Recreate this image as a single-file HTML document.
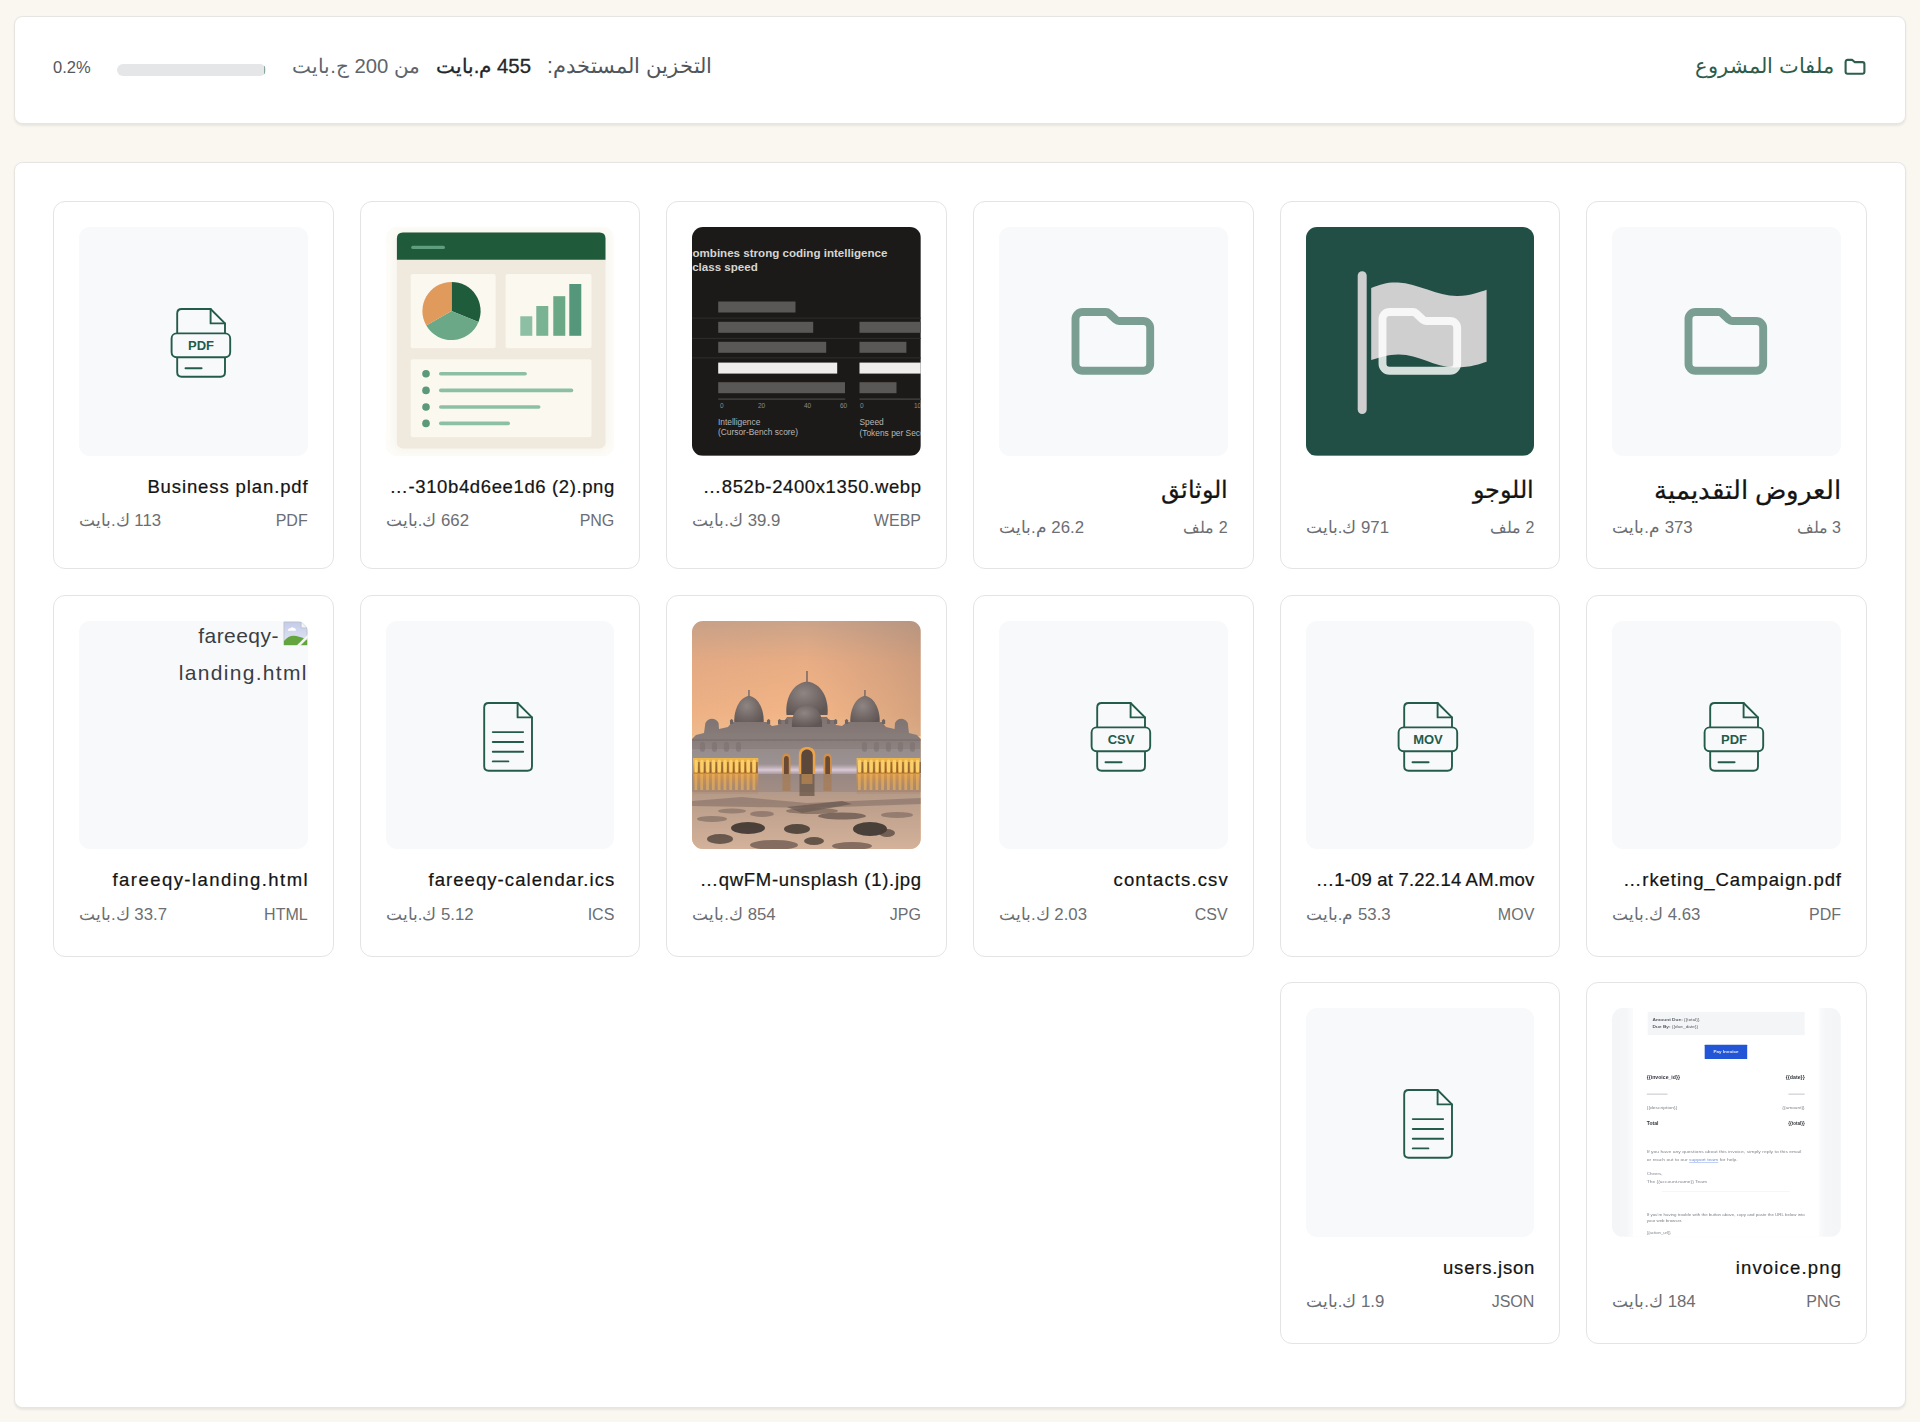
<!DOCTYPE html><html lang="ar"><head><meta charset="utf-8"><title>ملفات المشروع</title><style>

html,body{margin:0;padding:0}
body{width:1920px;height:1422px;overflow:hidden;background:#f9f7f0;font-family:"Liberation Sans",sans-serif;position:relative}
.panel{position:absolute;left:13.8px;width:1892px;box-sizing:border-box;background:#fff;border:1px solid #e6e5e2;border-radius:8.5px;box-shadow:0 1.5px 2.5px rgba(0,0,0,.07)}
.card{position:absolute;width:280.67px;box-sizing:border-box;border:1px solid #e4e4e4;border-radius:12px;background:#fff}
.thumb{position:absolute;left:25px;top:25px;width:228.67px;height:228.67px;border-radius:11px;background:#f8f9fb;overflow:hidden}
.thumb svg{position:absolute;left:0;top:0}
.t{position:absolute;white-space:nowrap;line-height:24px}
.title{right:25px;color:#141414;font-size:18.5px;letter-spacing:.9px;-webkit-text-stroke:.22px #141414}
.title.ar{font-size:24px;letter-spacing:0;direction:rtl}
.mr{right:25px;color:#6b6e72;font-size:16px;letter-spacing:0}
.ml{left:25px;color:#6b6e72;font-size:16.8px;direction:rtl}

</style></head><body>
<div class="panel" style="top:15.8px;height:108.5px"></div>
<svg style="position:absolute;left:1843px;top:57px" width="24" height="19" viewBox="0 0 24 19"><path d="M4.6 2.9 H9.3 L11.6 5.1 H19.4 Q21.4 5.1 21.4 7.1 V14.8 Q21.4 16.8 19.4 16.8 H4.6 Q2.6 16.8 2.6 14.8 V4.9 Q2.6 2.9 4.6 2.9 Z" fill="none" stroke="#2f5e4e" stroke-width="2.1" stroke-linejoin="round"/></svg>
<div class="t" style="right:86px;top:52px;font-size:21px;line-height:28px;color:#2d5c4b;direction:rtl">ملفات المشروع</div>
<div class="t" style="right:1208px;top:52px;font-size:21.4px;line-height:28px;color:#50565c;direction:rtl">التخزين المستخدم:</div>
<div class="t" style="right:1389px;top:52px;font-size:20.4px;line-height:28px;color:#23272b;-webkit-text-stroke:.3px #23272b;direction:rtl">455 م.بايت</div>
<div class="t" style="right:1500px;top:52px;font-size:20.3px;line-height:28px;color:#5f656b;direction:rtl">من 200 ج.بايت</div>
<div style="position:absolute;left:117px;top:64px;width:149px;height:12px;border-radius:6px;background:#e4e6e8;overflow:hidden"><div style="position:absolute;right:1px;top:2px;width:1.2px;height:8px;background:#8aa59c"></div></div>
<div class="t" style="left:53px;top:56px;font-size:16.5px;line-height:22px;color:#52575c">0.2%</div>
<div class="panel" style="top:161.8px;height:1246.5px"></div>
<div class="card" style="left:1586.33px;top:201.00px;height:368.00px">
<div class="thumb"><svg width="228.67" height="228.67" viewBox="0 0 228.67 228.67"><path d="M83.50 85.00 L106.90 85.00 Q108.70 85.00 109.96 86.26 L116.94 92.74 Q118.20 94.00 120.00 94.00 L144.20 94.00 A7.00 7.00 0 0 1 151.20 101.00 L151.20 136.80 A7.00 7.00 0 0 1 144.20 143.80 L83.50 143.80 A7.00 7.00 0 0 1 76.50 136.80 L76.50 92.00 A7.00 7.00 0 0 1 83.50 85.00 Z" fill="none" stroke="#7a9f92" stroke-width="7.9" stroke-linejoin="round"/></svg></div>
<div class="t title ar" style="top:275.5px;font-size:26px">العروض التقديمية</div>
<div class="t mr" style="top:314.0px;direction:rtl">3 ملف</div>
<div class="t ml" style="top:314.0px">373 م.بايت</div>
</div>
<div class="card" style="left:1279.67px;top:201.00px;height:368.00px">
<div class="thumb"><svg width="228.67" height="228.67" viewBox="0 0 228.67 228.67"><rect width="228.67" height="228.67" fill="#214f45"/><rect x="51.7" y="44.2" width="9" height="142.8" rx="4.5" fill="#cfcfd0"/><path d="M65.2 61 C75 57 82 55 92 55.5 C112 56.5 132 69.5 152 69 C165 68.7 174 65 180.6 62.8 L180.6 134.8 C174 137 165 140.6 148 140.4 C128 140 112 127 92 127.5 C82 127.8 75 130 65.2 133 Z" fill="#cfcfd0"/><path d="M83.50 85.00 L106.90 85.00 Q108.70 85.00 109.96 86.26 L116.94 92.74 Q118.20 94.00 120.00 94.00 L144.20 94.00 A7.00 7.00 0 0 1 151.20 101.00 L151.20 136.80 A7.00 7.00 0 0 1 144.20 143.80 L83.50 143.80 A7.00 7.00 0 0 1 76.50 136.80 L76.50 92.00 A7.00 7.00 0 0 1 83.50 85.00 Z" fill="none" stroke="rgba(255,255,255,.82)" stroke-width="7.9" stroke-linejoin="round"/></svg></div>
<div class="t title ar" style="top:275.5px;font-size:24px">اللوجو</div>
<div class="t mr" style="top:314.0px;direction:rtl">2 ملف</div>
<div class="t ml" style="top:314.0px">971 ك.بايت</div>
</div>
<div class="card" style="left:973.00px;top:201.00px;height:368.00px">
<div class="thumb"><svg width="228.67" height="228.67" viewBox="0 0 228.67 228.67"><path d="M83.50 85.00 L106.90 85.00 Q108.70 85.00 109.96 86.26 L116.94 92.74 Q118.20 94.00 120.00 94.00 L144.20 94.00 A7.00 7.00 0 0 1 151.20 101.00 L151.20 136.80 A7.00 7.00 0 0 1 144.20 143.80 L83.50 143.80 A7.00 7.00 0 0 1 76.50 136.80 L76.50 92.00 A7.00 7.00 0 0 1 83.50 85.00 Z" fill="none" stroke="#7a9f92" stroke-width="7.9" stroke-linejoin="round"/></svg></div>
<div class="t title ar" style="top:275.5px;font-size:24px">الوثائق</div>
<div class="t mr" style="top:314.0px;direction:rtl">2 ملف</div>
<div class="t ml" style="top:314.0px">26.2 م.بايت</div>
</div>
<div class="card" style="left:666.33px;top:201.00px;height:368.00px">
<div class="thumb"><svg width="228.67" height="228.67" viewBox="0 0 228.67 228.67"><rect width="228.67" height="228.67" fill="#1b1a19"/><text x="-6" y="30.5" font-family="Liberation Sans" font-weight="bold" font-size="11.6" fill="#d6d5d2">combines strong coding intelligence</text><text x="-14" y="44" font-family="Liberation Sans" font-weight="bold" font-size="11.6" fill="#d6d5d2">in-class speed</text><rect x="0" y="90.6" width="228.67" height="1" fill="#302e2c"/><rect x="0" y="110.9" width="228.67" height="1" fill="#302e2c"/><rect x="0" y="130.4" width="228.67" height="1" fill="#302e2c"/><rect x="26.2" y="74.5" width="77.3" height="11" fill="#5a5856"/><rect x="26.2" y="94.8" width="95.0" height="11" fill="#5a5856"/><rect x="167.5" y="94.8" width="61.2" height="11" fill="#5a5856"/><rect x="26.2" y="114.8" width="108.0" height="11" fill="#5a5856"/><rect x="167.5" y="114.8" width="46.9" height="11" fill="#5a5856"/><rect x="26.2" y="135.6" width="119.0" height="11" fill="#efeeec"/><rect x="167.5" y="135.6" width="61.2" height="11" fill="#efeeec"/><rect x="26.2" y="155.2" width="126.8" height="11" fill="#5a5856"/><rect x="167.5" y="155.2" width="37.0" height="11" fill="#5a5856"/><rect x="26.2" y="171.5" width="127" height="1.2" fill="#4a4846"/><rect x="167.5" y="171.5" width="62" height="1.2" fill="#4a4846"/><text x="28" y="181" font-family="Liberation Sans" font-size="6.5" fill="#8d8b88">0</text><text x="66" y="181" font-family="Liberation Sans" font-size="6.5" fill="#8d8b88">20</text><text x="112" y="181" font-family="Liberation Sans" font-size="6.5" fill="#8d8b88">40</text><text x="148" y="181" font-family="Liberation Sans" font-size="6.5" fill="#8d8b88">60</text><text x="168" y="181" font-family="Liberation Sans" font-size="6.5" fill="#8d8b88">0</text><text x="222" y="181" font-family="Liberation Sans" font-size="6.5" fill="#8d8b88">10</text><text x="26" y="198" font-family="Liberation Sans" font-size="8.4" fill="#b9b7b4">Intelligence</text><text x="26" y="208.5" font-family="Liberation Sans" font-size="8.4" fill="#b9b7b4">(Cursor-Bench score)</text><text x="167.5" y="198.5" font-family="Liberation Sans" font-size="8.4" fill="#b9b7b4">Speed</text><text x="167.5" y="209" font-family="Liberation Sans" font-size="8.4" fill="#b9b7b4">(Tokens per Second)</text></svg></div>
<div class="t title" style="top:272.6px;direction:ltr;letter-spacing:0.61px;right:24.39px">…852b-2400x1350.webp</div>
<div class="t mr" style="top:307.0px;direction:rtl">WEBP</div>
<div class="t ml" style="top:307.0px">39.9 ك.بايت</div>
</div>
<div class="card" style="left:359.67px;top:201.00px;height:368.00px">
<div class="thumb"><svg width="228.67" height="228.67" viewBox="0 0 228.67 228.67"><rect width="228.67" height="228.67" fill="#fdfcf8"/><defs><filter id="sh" x="-20%" y="-20%" width="140%" height="140%"><feGaussianBlur stdDeviation="4"/></filter></defs><rect x="8" y="4" width="214" height="220" rx="8" fill="#ece6d6" opacity=".3" filter="url(#sh)"/><rect x="10.9" y="5.5" width="208.6" height="215.9" rx="6" fill="#efe9de"/><path d="M10.9 32.8 V11.5 Q10.9 5.5 16.9 5.5 H213.5 Q219.5 5.5 219.5 11.5 V32.8 Z" fill="#1f5a3b"/><rect x="25.2" y="18.8" width="33.8" height="3.2" rx="1.6" fill="#5f9d7f"/><rect x="24.7" y="47.1" width="85" height="74.1" rx="2" fill="#fbf8f0"/><rect x="119.6" y="47.1" width="85.9" height="74.1" rx="2" fill="#fbf8f0"/><rect x="24.7" y="132.2" width="180.8" height="78" rx="2" fill="#fbf8f0"/><path d="M65.50 84.00 L65.50 54.90 A29.10 29.10 0 0 1 92.48 94.90 Z" fill="#1e5c3c"/><path d="M65.50 84.00 L92.48 94.90 A29.10 29.10 0 0 1 40.30 98.55 Z" fill="#6aa888"/><path d="M65.50 84.00 L40.30 98.55 A29.10 29.10 0 0 1 65.50 54.90 Z" fill="#e09a5c"/><rect x="134.3" y="89.3" width="12" height="19.5" fill="#8cbfa3"/><rect x="150.3" y="79.0" width="12" height="29.8" fill="#79b394"/><rect x="167.3" y="69.2" width="12" height="39.6" fill="#6aa886"/><rect x="183.3" y="57.0" width="12" height="51.8" fill="#55977a"/><circle cx="40" cy="146.7" r="3.8" fill="#5a9a78"/><rect x="53" y="144.9" width="87.9" height="3.6" rx="1.8" fill="#8dbfa5"/><circle cx="40" cy="163.4" r="3.8" fill="#5a9a78"/><rect x="53" y="161.6" width="134.3" height="3.6" rx="1.8" fill="#8dbfa5"/><circle cx="40" cy="180.0" r="3.8" fill="#5a9a78"/><rect x="53" y="178.2" width="101.5" height="3.6" rx="1.8" fill="#8dbfa5"/><circle cx="40" cy="196.4" r="3.8" fill="#5a9a78"/><rect x="53" y="194.6" width="71.0" height="3.6" rx="1.8" fill="#8dbfa5"/></svg></div>
<div class="t title" style="top:272.6px;direction:ltr;letter-spacing:0.62px;right:24.38px">…-310b4d6ee1d6 (2).png</div>
<div class="t mr" style="top:307.0px;direction:rtl">PNG</div>
<div class="t ml" style="top:307.0px">662 ك.بايت</div>
</div>
<div class="card" style="left:53.00px;top:201.00px;height:368.00px">
<div class="thumb"><svg width="228.67" height="228.67" viewBox="0 0 228.67 228.67"><g fill="none" stroke="#245c4a" stroke-width="1.90" stroke-linejoin="round" stroke-linecap="round"><path d="M102.70 82.00 L131.60 82.00 L146.00 96.40 L146.00 145.30 Q146.00 149.80 141.50 149.80 L102.70 149.80 Q98.20 149.80 98.20 145.30 L98.20 86.50 Q98.20 82.00 102.70 82.00 Z"/><path d="M131.60 82.00 L131.60 96.40 L146.00 96.40"/><rect x="92.6" y="106.4" width="58.6" height="23.9" rx="5" fill="#f8f9fb"/><line x1="106.5" y1="141.2" x2="122.6" y2="141.2"/></g><text x="122" y="123.2" text-anchor="middle" font-family="Liberation Sans" font-weight="bold" font-size="13" fill="#245c4a">PDF</text></svg></div>
<div class="t title" style="top:272.6px;direction:ltr;letter-spacing:0.89px;right:24.11px">Business plan.pdf</div>
<div class="t mr" style="top:307.0px;direction:rtl">PDF</div>
<div class="t ml" style="top:307.0px">113 ك.بايت</div>
</div>
<div class="card" style="left:1586.33px;top:594.50px;height:362.00px">
<div class="thumb"><svg width="228.67" height="228.67" viewBox="0 0 228.67 228.67"><g fill="none" stroke="#245c4a" stroke-width="1.90" stroke-linejoin="round" stroke-linecap="round"><path d="M102.70 82.00 L131.60 82.00 L146.00 96.40 L146.00 145.30 Q146.00 149.80 141.50 149.80 L102.70 149.80 Q98.20 149.80 98.20 145.30 L98.20 86.50 Q98.20 82.00 102.70 82.00 Z"/><path d="M131.60 82.00 L131.60 96.40 L146.00 96.40"/><rect x="92.6" y="106.4" width="58.6" height="23.9" rx="5" fill="#f8f9fb"/><line x1="106.5" y1="141.2" x2="122.6" y2="141.2"/></g><text x="122" y="123.2" text-anchor="middle" font-family="Liberation Sans" font-weight="bold" font-size="13" fill="#245c4a">PDF</text></svg></div>
<div class="t title" style="top:272.6px;direction:ltr;letter-spacing:0.93px;right:24.07px">…rketing_Campaign.pdf</div>
<div class="t mr" style="top:307.0px;direction:rtl">PDF</div>
<div class="t ml" style="top:307.0px">4.63 ك.بايت</div>
</div>
<div class="card" style="left:1279.67px;top:594.50px;height:362.00px">
<div class="thumb"><svg width="228.67" height="228.67" viewBox="0 0 228.67 228.67"><g fill="none" stroke="#245c4a" stroke-width="1.90" stroke-linejoin="round" stroke-linecap="round"><path d="M102.70 82.00 L131.60 82.00 L146.00 96.40 L146.00 145.30 Q146.00 149.80 141.50 149.80 L102.70 149.80 Q98.20 149.80 98.20 145.30 L98.20 86.50 Q98.20 82.00 102.70 82.00 Z"/><path d="M131.60 82.00 L131.60 96.40 L146.00 96.40"/><rect x="92.6" y="106.4" width="58.6" height="23.9" rx="5" fill="#f8f9fb"/><line x1="106.5" y1="141.2" x2="122.6" y2="141.2"/></g><text x="122" y="123.2" text-anchor="middle" font-family="Liberation Sans" font-weight="bold" font-size="13" fill="#245c4a">MOV</text></svg></div>
<div class="t title" style="top:272.6px;direction:ltr;letter-spacing:0.17px;right:24.83px">…1-09 at 7.22.14 AM.mov</div>
<div class="t mr" style="top:307.0px;direction:rtl">MOV</div>
<div class="t ml" style="top:307.0px">53.3 م.بايت</div>
</div>
<div class="card" style="left:973.00px;top:594.50px;height:362.00px">
<div class="thumb"><svg width="228.67" height="228.67" viewBox="0 0 228.67 228.67"><g fill="none" stroke="#245c4a" stroke-width="1.90" stroke-linejoin="round" stroke-linecap="round"><path d="M102.70 82.00 L131.60 82.00 L146.00 96.40 L146.00 145.30 Q146.00 149.80 141.50 149.80 L102.70 149.80 Q98.20 149.80 98.20 145.30 L98.20 86.50 Q98.20 82.00 102.70 82.00 Z"/><path d="M131.60 82.00 L131.60 96.40 L146.00 96.40"/><rect x="92.6" y="106.4" width="58.6" height="23.9" rx="5" fill="#f8f9fb"/><line x1="106.5" y1="141.2" x2="122.6" y2="141.2"/></g><text x="122" y="123.2" text-anchor="middle" font-family="Liberation Sans" font-weight="bold" font-size="13" fill="#245c4a">CSV</text></svg></div>
<div class="t title" style="top:272.6px;direction:ltr;letter-spacing:1.12px;right:23.88px">contacts.csv</div>
<div class="t mr" style="top:307.0px;direction:rtl">CSV</div>
<div class="t ml" style="top:307.0px">2.03 ك.بايت</div>
</div>
<div class="card" style="left:666.33px;top:594.50px;height:362.00px">
<div class="thumb"><svg width="228.67" height="228.67" viewBox="0 0 228.67 228.67"><defs><linearGradient id="sky" x1="0" y1="0" x2="0" y2="1"><stop offset="0" stop-color="#cba389"/><stop offset=".18" stop-color="#e9ad84"/><stop offset=".4" stop-color="#f3b586"/><stop offset=".58" stop-color="#f7c594"/><stop offset="1" stop-color="#f4bf92"/></linearGradient><linearGradient id="skyx" x1="0" y1="0" x2="1" y2="0"><stop offset="0" stop-color="#8a7470" stop-opacity=".06"/><stop offset=".5" stop-color="#8a7470" stop-opacity="0"/><stop offset="1" stop-color="#7a6a66" stop-opacity=".25"/></linearGradient><linearGradient id="bld" x1="0" y1="0" x2="0" y2="1"><stop offset="0" stop-color="#7e7370"/><stop offset=".5" stop-color="#8c817e"/><stop offset="1" stop-color="#9d9496"/></linearGradient><linearGradient id="wat" x1="0" y1="0" x2="0" y2="1"><stop offset="0" stop-color="#a08f88"/><stop offset=".3" stop-color="#b89c8a"/><stop offset="1" stop-color="#d4b29a"/></linearGradient><radialGradient id="dome" cx=".42" cy=".35" r=".7"><stop offset="0" stop-color="#8f8583"/><stop offset=".6" stop-color="#716765"/><stop offset="1" stop-color="#5f5654"/></radialGradient><linearGradient id="lite" x1="0" y1="0" x2="0" y2="1"><stop offset="0" stop-color="#f2b94c"/><stop offset="1" stop-color="#c88838"/></linearGradient><linearGradient id="refl" x1="0" y1="0" x2="0" y2="1"><stop offset="0" stop-color="#d99646"/><stop offset="1" stop-color="#a88062" stop-opacity=".25"/></linearGradient><linearGradient id="glow" x1="0" y1="0" x2="0" y2="1"><stop offset="0" stop-color="#c8b6c2" stop-opacity="0"/><stop offset=".5" stop-color="#dccbd8"/><stop offset="1" stop-color="#a8949a" stop-opacity=".3"/></linearGradient><filter id="soft" x="0" y="0" width="1" height="1"><feGaussianBlur stdDeviation=".5"/></filter></defs><rect width="228.67" height="228.67" fill="url(#sky)"/><rect width="228.67" height="115" fill="url(#skyx)"/><g filter="url(#soft)"><rect x="114.3" y="50" width="1.4" height="12" fill="#6d6260"/><rect x="56.3" y="69" width="1.3" height="7" fill="#6d6260"/><rect x="172.3" y="69" width="1.3" height="7" fill="#6d6260"/><path d="M94.5 94 C93 78 100 62.5 115 60.6 C130 62.5 137 78 135.5 94 Z" fill="url(#dome)"/><path d="M42.5 104 C41 90 47 76.5 57 74.7 C67 76.5 73 90 71.5 104 Z" fill="url(#dome)"/><path d="M158.5 104 C157 90 163 76.5 173 74.7 C183 76.5 189 90 187.5 104 Z" fill="url(#dome)"/><path d="M0 118 L4 114 L12 112 L13.4 102 Q16 97.8 20 97.8 Q24 97.8 26.6 102 L27 108 L36 106 L40 101 L75 101 L80 105 L86 104 L88 99 L93 99 L95 96 L135 96 L137 99 L142 99 L144 104 L150 105 L155 101 L190 101 L194 106 L202.6 108 L203 102 Q205.5 97.8 209.2 97.8 Q213 97.8 215.8 102 L217 112 L225 114 L228.67 118 L228.67 156 L0 156 Z" fill="url(#bld)"/><path d="M100 106 C99 94 105 84.6 115 84.6 C125 84.6 131 94 130 106 Z" fill="url(#dome)"/><path d="M86.0 103 V99.5 Q87.6 96.5 89.2 99.5 V103 Z" fill="#6f6563"/><path d="M93.0 103 V99.5 Q94.6 96.5 96.2 99.5 V103 Z" fill="#6f6563"/><path d="M135.0 103 V99.5 Q136.6 96.5 138.2 99.5 V103 Z" fill="#6f6563"/><path d="M142.0 103 V99.5 Q143.6 96.5 145.2 99.5 V103 Z" fill="#6f6563"/><path d="M38.0 103 V99.5 Q39.6 96.5 41.2 99.5 V103 Z" fill="#6f6563"/><path d="M75.0 103 V99.5 Q76.6 96.5 78.2 99.5 V103 Z" fill="#6f6563"/><path d="M153.0 103 V99.5 Q154.6 96.5 156.2 99.5 V103 Z" fill="#6f6563"/><path d="M190.0 103 V99.5 Q191.6 96.5 193.2 99.5 V103 Z" fill="#6f6563"/><rect x="0" y="118" width="228.67" height="2" fill="#75696a" opacity=".5"/><rect x="0" y="128" width="228.67" height="24" fill="#a29a9c" opacity=".45"/><rect x="8.0" y="121" width="5" height="10" rx="2.5" fill="#7a6f6e" opacity=".55"/><rect x="20.0" y="121" width="5" height="10" rx="2.5" fill="#7a6f6e" opacity=".55"/><rect x="32.0" y="121" width="5" height="10" rx="2.5" fill="#7a6f6e" opacity=".55"/><rect x="44.0" y="121" width="5" height="10" rx="2.5" fill="#7a6f6e" opacity=".55"/><rect x="170.0" y="121" width="5" height="10" rx="2.5" fill="#7a6f6e" opacity=".55"/><rect x="182.0" y="121" width="5" height="10" rx="2.5" fill="#7a6f6e" opacity=".55"/><rect x="194.0" y="121" width="5" height="10" rx="2.5" fill="#7a6f6e" opacity=".55"/><rect x="206.0" y="121" width="5" height="10" rx="2.5" fill="#7a6f6e" opacity=".55"/><rect x="218.0" y="121" width="5" height="10" rx="2.5" fill="#7a6f6e" opacity=".55"/><rect x="1" y="137" width="65.3" height="16" fill="url(#lite)"/><rect x="164.6" y="137" width="63.6" height="16" fill="url(#lite)"/><rect x="2.5" y="138.5" width="3.2" height="13" rx="1.6" fill="#fbd06a"/><rect x="6.1" y="141" width="1.6" height="11" fill="#6a4628" opacity=".6"/><rect x="166.0" y="138.5" width="3.2" height="13" rx="1.6" fill="#fbd06a"/><rect x="169.6" y="141" width="1.6" height="11" fill="#6a4628" opacity=".6"/><rect x="8.3" y="138.5" width="3.2" height="13" rx="1.6" fill="#fbd06a"/><rect x="11.9" y="141" width="1.6" height="11" fill="#6a4628" opacity=".6"/><rect x="171.8" y="138.5" width="3.2" height="13" rx="1.6" fill="#fbd06a"/><rect x="175.4" y="141" width="1.6" height="11" fill="#6a4628" opacity=".6"/><rect x="14.1" y="138.5" width="3.2" height="13" rx="1.6" fill="#fbd06a"/><rect x="17.7" y="141" width="1.6" height="11" fill="#6a4628" opacity=".6"/><rect x="177.6" y="138.5" width="3.2" height="13" rx="1.6" fill="#fbd06a"/><rect x="181.2" y="141" width="1.6" height="11" fill="#6a4628" opacity=".6"/><rect x="19.9" y="138.5" width="3.2" height="13" rx="1.6" fill="#fbd06a"/><rect x="23.5" y="141" width="1.6" height="11" fill="#6a4628" opacity=".6"/><rect x="183.4" y="138.5" width="3.2" height="13" rx="1.6" fill="#fbd06a"/><rect x="187.0" y="141" width="1.6" height="11" fill="#6a4628" opacity=".6"/><rect x="25.7" y="138.5" width="3.2" height="13" rx="1.6" fill="#fbd06a"/><rect x="29.3" y="141" width="1.6" height="11" fill="#6a4628" opacity=".6"/><rect x="189.2" y="138.5" width="3.2" height="13" rx="1.6" fill="#fbd06a"/><rect x="192.8" y="141" width="1.6" height="11" fill="#6a4628" opacity=".6"/><rect x="31.5" y="138.5" width="3.2" height="13" rx="1.6" fill="#fbd06a"/><rect x="35.1" y="141" width="1.6" height="11" fill="#6a4628" opacity=".6"/><rect x="195.0" y="138.5" width="3.2" height="13" rx="1.6" fill="#fbd06a"/><rect x="198.6" y="141" width="1.6" height="11" fill="#6a4628" opacity=".6"/><rect x="37.3" y="138.5" width="3.2" height="13" rx="1.6" fill="#fbd06a"/><rect x="40.9" y="141" width="1.6" height="11" fill="#6a4628" opacity=".6"/><rect x="200.8" y="138.5" width="3.2" height="13" rx="1.6" fill="#fbd06a"/><rect x="204.4" y="141" width="1.6" height="11" fill="#6a4628" opacity=".6"/><rect x="43.1" y="138.5" width="3.2" height="13" rx="1.6" fill="#fbd06a"/><rect x="46.7" y="141" width="1.6" height="11" fill="#6a4628" opacity=".6"/><rect x="206.6" y="138.5" width="3.2" height="13" rx="1.6" fill="#fbd06a"/><rect x="210.2" y="141" width="1.6" height="11" fill="#6a4628" opacity=".6"/><rect x="48.9" y="138.5" width="3.2" height="13" rx="1.6" fill="#fbd06a"/><rect x="52.5" y="141" width="1.6" height="11" fill="#6a4628" opacity=".6"/><rect x="212.4" y="138.5" width="3.2" height="13" rx="1.6" fill="#fbd06a"/><rect x="216.0" y="141" width="1.6" height="11" fill="#6a4628" opacity=".6"/><rect x="54.7" y="138.5" width="3.2" height="13" rx="1.6" fill="#fbd06a"/><rect x="58.3" y="141" width="1.6" height="11" fill="#6a4628" opacity=".6"/><rect x="218.2" y="138.5" width="3.2" height="13" rx="1.6" fill="#fbd06a"/><rect x="221.8" y="141" width="1.6" height="11" fill="#6a4628" opacity=".6"/><rect x="60.5" y="138.5" width="3.2" height="13" rx="1.6" fill="#fbd06a"/><rect x="64.1" y="141" width="1.6" height="11" fill="#6a4628" opacity=".6"/><rect x="224.0" y="138.5" width="3.2" height="13" rx="1.6" fill="#fbd06a"/><rect x="227.6" y="141" width="1.6" height="11" fill="#6a4628" opacity=".6"/><rect x="66" y="143" width="98.6" height="12" fill="url(#glow)"/><path d="M106.8 153 V134 C106.8 128 110.5 125.9 115 125.9 C119.6 125.9 123.3 128 123.3 134 V153 Z" fill="#eca44c"/><path d="M109.3 153 V135 C109.3 131 111.8 128.6 115 128.6 C118.2 128.6 120.8 131 120.8 135 V153 Z" fill="#5b473b"/><path d="M90.2 153 V137 C90.2 134 92 132.5 94.4 132.5 C96.8 132.5 98.5 134 98.5 137 V153 Z" fill="#d0904a"/><path d="M92 153 V138 C92 136 93 135 94.4 135 C95.8 135 96.8 136 96.8 138 V153 Z" fill="#6b4a35"/><path d="M131.5 153 V137 C131.5 134 133.3 132.5 135.6 132.5 C138 132.5 139.8 134 139.8 137 V153 Z" fill="#d0904a"/><path d="M133.3 153 V138 C133.3 136 134.3 135 135.6 135 C137 135 138 136 138 138 V153 Z" fill="#6b4a35"/><rect x="0" y="153" width="228.67" height="76" fill="url(#wat)"/><rect x="0" y="153" width="228.67" height="18" fill="#8d7f7c" opacity=".45"/><rect x="1" y="153" width="65.3" height="20" fill="url(#refl)"/><rect x="164.6" y="153" width="63.6" height="20" fill="url(#refl)"/><rect x="2.5" y="153" width="2.8" height="16" fill="#f0b85c" opacity=".55"/><rect x="166.0" y="153" width="2.8" height="16" fill="#f0b85c" opacity=".55"/><rect x="8.3" y="153" width="2.8" height="16" fill="#f0b85c" opacity=".55"/><rect x="171.8" y="153" width="2.8" height="16" fill="#f0b85c" opacity=".55"/><rect x="14.1" y="153" width="2.8" height="16" fill="#f0b85c" opacity=".55"/><rect x="177.6" y="153" width="2.8" height="16" fill="#f0b85c" opacity=".55"/><rect x="19.9" y="153" width="2.8" height="16" fill="#f0b85c" opacity=".55"/><rect x="183.4" y="153" width="2.8" height="16" fill="#f0b85c" opacity=".55"/><rect x="25.7" y="153" width="2.8" height="16" fill="#f0b85c" opacity=".55"/><rect x="189.2" y="153" width="2.8" height="16" fill="#f0b85c" opacity=".55"/><rect x="31.5" y="153" width="2.8" height="16" fill="#f0b85c" opacity=".55"/><rect x="195.0" y="153" width="2.8" height="16" fill="#f0b85c" opacity=".55"/><rect x="37.3" y="153" width="2.8" height="16" fill="#f0b85c" opacity=".55"/><rect x="200.8" y="153" width="2.8" height="16" fill="#f0b85c" opacity=".55"/><rect x="43.1" y="153" width="2.8" height="16" fill="#f0b85c" opacity=".55"/><rect x="206.6" y="153" width="2.8" height="16" fill="#f0b85c" opacity=".55"/><rect x="48.9" y="153" width="2.8" height="16" fill="#f0b85c" opacity=".55"/><rect x="212.4" y="153" width="2.8" height="16" fill="#f0b85c" opacity=".55"/><rect x="54.7" y="153" width="2.8" height="16" fill="#f0b85c" opacity=".55"/><rect x="218.2" y="153" width="2.8" height="16" fill="#f0b85c" opacity=".55"/><rect x="60.5" y="153" width="2.8" height="16" fill="#f0b85c" opacity=".55"/><rect x="224.0" y="153" width="2.8" height="16" fill="#f0b85c" opacity=".55"/><rect x="107.5" y="153" width="15" height="22" fill="#6a5548" opacity=".75"/><rect x="109.5" y="153" width="11" height="10" fill="#d89448" opacity=".5"/><rect x="90.5" y="153" width="8" height="17" fill="#a8784a" opacity=".6"/><rect x="131.5" y="153" width="8" height="17" fill="#a8784a" opacity=".6"/><path d="M0 180 L50 176 L115 182 L228.67 177 L228.67 183 L120 187 L0 185 Z" fill="#7d6b62" opacity=".55"/><path d="M95 186 L150 180 L160 183 L110 192 Z" fill="#5f4f47" opacity=".6"/><ellipse cx="56.0" cy="207.0" rx="17.0" ry="6.0" fill="#3e3530" opacity="0.90"/><ellipse cx="105.0" cy="208.0" rx="13.0" ry="5.0" fill="#433832" opacity="0.85"/><ellipse cx="178.0" cy="208.0" rx="17.0" ry="7.0" fill="#3c3430" opacity="0.90"/><ellipse cx="28.0" cy="218.0" rx="13.0" ry="5.0" fill="#4e423c" opacity="0.80"/><ellipse cx="150.0" cy="195.0" rx="24.0" ry="3.5" fill="#5d4e46" opacity="0.70"/><ellipse cx="120.0" cy="190.0" rx="26.0" ry="3.0" fill="#6a5a50" opacity="0.60"/><ellipse cx="20.0" cy="198.0" rx="15.0" ry="3.0" fill="#6f5e55" opacity="0.55"/><ellipse cx="205.0" cy="194.0" rx="16.0" ry="3.0" fill="#6f5e55" opacity="0.55"/><ellipse cx="82.0" cy="224.0" rx="24.0" ry="5.0" fill="#5a4a42" opacity="0.65"/><ellipse cx="160.0" cy="225.0" rx="20.0" ry="4.0" fill="#5a4a42" opacity="0.65"/><ellipse cx="122.0" cy="220.0" rx="10.0" ry="4.0" fill="#4a3d36" opacity="0.80"/><ellipse cx="70.0" cy="193.0" rx="12.0" ry="3.0" fill="#6f5e55" opacity="0.55"/><ellipse cx="40.0" cy="190.0" rx="14.0" ry="2.5" fill="#6f5e55" opacity="0.50"/><ellipse cx="195.0" cy="212.0" rx="8.0" ry="4.0" fill="#4a3d36" opacity="0.70"/></g></svg></div>
<div class="t title" style="top:272.6px;direction:ltr;letter-spacing:0.70px;right:24.30px">…qwFM-unsplash (1).jpg</div>
<div class="t mr" style="top:307.0px;direction:rtl">JPG</div>
<div class="t ml" style="top:307.0px">854 ك.بايت</div>
</div>
<div class="card" style="left:359.67px;top:594.50px;height:362.00px">
<div class="thumb"><svg width="228.67" height="228.67" viewBox="0 0 228.67 228.67"><g fill="none" stroke="#245c4a" stroke-width="1.90" stroke-linejoin="round" stroke-linecap="round"><path d="M102.70 82.00 L131.60 82.00 L146.00 96.40 L146.00 145.30 Q146.00 149.80 141.50 149.80 L102.70 149.80 Q98.20 149.80 98.20 145.30 L98.20 86.50 Q98.20 82.00 102.70 82.00 Z"/><path d="M131.60 82.00 L131.60 96.40 L146.00 96.40"/><line x1="106.8" y1="111.10" x2="137.20" y2="111.10"/><line x1="106.8" y1="121.00" x2="137.20" y2="121.00"/><line x1="106.8" y1="130.80" x2="137.20" y2="130.80"/><line x1="106.8" y1="140.40" x2="122.40" y2="140.40"/></g></svg></div>
<div class="t title" style="top:272.6px;direction:ltr;letter-spacing:1.07px;right:23.93px">fareeqy-calendar.ics</div>
<div class="t mr" style="top:307.0px;direction:rtl">ICS</div>
<div class="t ml" style="top:307.0px">5.12 ك.بايت</div>
</div>
<div class="card" style="left:53.00px;top:594.50px;height:362.00px">
<div class="thumb"><div class="t" style="right:28.8px;top:3px;font-size:21px;line-height:24px;letter-spacing:.45px;color:#3a3e43;direction:ltr">fareeqy-</div><div class="t" style="right:0;top:40px;font-size:21px;line-height:24px;letter-spacing:1.3px;color:#3a3e43;direction:ltr">landing.html</div><svg style="left:auto;right:0;top:0" width="25" height="25" viewBox="0 0 16 16"><defs><linearGradient id="bsky" x1="0" y1="0" x2="0" y2="1"><stop offset="0" stop-color="#c3cbe9"/><stop offset="1" stop-color="#e4e8f4"/></linearGradient></defs><path d="M0.6 0.6 H11.6 L15.4 4.4 V15.4 H0.6 Z" fill="url(#bsky)" stroke="#b9bec6" stroke-width=".5"/><path d="M3 6.2 Q3.2 4.6 4.8 4.7 Q5.6 3.4 7 4.4 Q8.4 4.4 8.2 6.2 Z" fill="#ffffff"/><path d="M0.6 15.4 V12.8 Q4 8.6 8.5 9.6 Q12 10.4 15.4 12 V15.4 Z" fill="#62a43e"/><path d="M11.6 0.6 V4.4 H15.4" fill="#f4f5f7" stroke="#b9bec6" stroke-width=".5"/><path d="M9.2 16.5 L16.5 9.2" stroke="#f1f4f2" stroke-width="1.7"/></svg></div>
<div class="t title" style="top:272.6px;direction:ltr;letter-spacing:1.45px;right:23.55px">fareeqy-landing.html</div>
<div class="t mr" style="top:307.0px;direction:rtl">HTML</div>
<div class="t ml" style="top:307.0px">33.7 ك.بايت</div>
</div>
<div class="card" style="left:1586.33px;top:982.00px;height:362.00px">
<div class="thumb"><svg width="228.67" height="228.67" viewBox="0 0 228.67 228.67"><defs><linearGradient id="bandl" x1="0" y1="0" x2="1" y2="0"><stop offset="0" stop-color="#f3f5f7"/><stop offset=".7" stop-color="#f5f6f8"/><stop offset="1" stop-color="#fbfbfc"/></linearGradient><linearGradient id="bandr" x1="1" y1="0" x2="0" y2="0"><stop offset="0" stop-color="#f3f5f7"/><stop offset=".7" stop-color="#f5f6f8"/><stop offset="1" stop-color="#fbfbfc"/></linearGradient><filter id="ib" x="-5%" y="-50%" width="110%" height="200%"><feGaussianBlur stdDeviation=".35"/></filter></defs><rect x="0" y="0" width="228.67" height="228.67" fill="#ffffff"/><rect x="0" y="0" width="21" height="228.67" fill="url(#bandl)"/><rect x="207" y="0" width="21.7" height="228.67" fill="url(#bandr)"/><rect x="35.7" y="3.9" width="157" height="23.2" fill="#f4f5f7"/><g filter="url(#ib)"><text x="40.6" y="13.0" font-family="Liberation Sans" font-size="4.4" fill="#555a61" textLength="47.0" lengthAdjust="spacingAndGlyphs" text-anchor="start"><tspan font-weight="bold">Amount Due:</tspan> {{total}}</text><text x="40.6" y="20.1" font-family="Liberation Sans" font-size="4.4" fill="#555a61" textLength="45.5" lengthAdjust="spacingAndGlyphs" text-anchor="start"><tspan font-weight="bold">Due By:</tspan> {{due_date}}</text><rect x="92.7" y="36.7" width="42.5" height="14.3" rx=".6" fill="#2456d6"/><text x="114.0" y="45.4" font-family="Liberation Sans" font-size="4.3" fill="#dfe7fb" font-weight="bold" textLength="25.0" lengthAdjust="spacingAndGlyphs" text-anchor="middle">Pay Invoice</text><text x="34.8" y="71.3" font-family="Liberation Sans" font-size="4.8" fill="#33373d" font-weight="bold" textLength="33.1" lengthAdjust="spacingAndGlyphs" text-anchor="start">{{invoice_id}}</text><text x="192.7" y="71.3" font-family="Liberation Sans" font-size="4.8" fill="#33373d" font-weight="bold" textLength="19.0" lengthAdjust="spacingAndGlyphs" text-anchor="end">{{date}}</text><rect x="34.8" y="85.6" width="20.7" height="1.1" fill="#c8cbd0"/><rect x="176.5" y="85.6" width="16.2" height="1.1" fill="#c8cbd0"/><text x="34.8" y="101.4" font-family="Liberation Sans" font-size="4.3" fill="#7f838a" textLength="30.6" lengthAdjust="spacingAndGlyphs" text-anchor="start">{{description}}</text><text x="192.7" y="101.4" font-family="Liberation Sans" font-size="4.3" fill="#7f838a" textLength="22.3" lengthAdjust="spacingAndGlyphs" text-anchor="end">{{amount}}</text><text x="34.8" y="116.8" font-family="Liberation Sans" font-size="4.8" fill="#33373d" font-weight="bold" textLength="11.6" lengthAdjust="spacingAndGlyphs" text-anchor="start">Total</text><text x="192.7" y="116.8" font-family="Liberation Sans" font-size="4.8" fill="#33373d" font-weight="bold" textLength="16.5" lengthAdjust="spacingAndGlyphs" text-anchor="end">{{total}}</text><text x="34.8" y="145.0" font-family="Liberation Sans" font-size="4.3" fill="#83878e" textLength="154.5" lengthAdjust="spacingAndGlyphs" text-anchor="start">If you have any questions about this invoice, simply reply to this email</text><text x="34.8" y="153.2" font-family="Liberation Sans" font-size="4.3" fill="#83878e" textLength="91.0" lengthAdjust="spacingAndGlyphs" text-anchor="start">or reach out to our <tspan fill="#6f8fe0" text-decoration="underline">support team</tspan> for help.</text><text x="34.8" y="167.1" font-family="Liberation Sans" font-size="4.3" fill="#83878e" textLength="15.7" lengthAdjust="spacingAndGlyphs" text-anchor="start">Cheers,</text><text x="34.8" y="175.4" font-family="Liberation Sans" font-size="4.3" fill="#83878e" textLength="60.3" lengthAdjust="spacingAndGlyphs" text-anchor="start">The {{account.name}} Team</text><rect x="50" y="183" width="128" height=".6" fill="#eef0f2"/><text x="34.8" y="207.6" font-family="Liberation Sans" font-size="3.9" fill="#7f838a" textLength="158.0" lengthAdjust="spacingAndGlyphs" text-anchor="start">If you're having trouble with the button above, copy and paste the URL below into</text><text x="34.8" y="213.8" font-family="Liberation Sans" font-size="3.9" fill="#7f838a" textLength="35.5" lengthAdjust="spacingAndGlyphs" text-anchor="start">your web browser.</text><text x="34.8" y="225.8" font-family="Liberation Sans" font-size="4.1" fill="#7f838a" textLength="24.0" lengthAdjust="spacingAndGlyphs" text-anchor="start">{{action_url}}</text></g></svg></div>
<div class="t title" style="top:272.6px;direction:ltr;letter-spacing:1.17px;right:23.83px">invoice.png</div>
<div class="t mr" style="top:307.0px;direction:rtl">PNG</div>
<div class="t ml" style="top:307.0px">184 ك.بايت</div>
</div>
<div class="card" style="left:1279.67px;top:982.00px;height:362.00px">
<div class="thumb"><svg width="228.67" height="228.67" viewBox="0 0 228.67 228.67"><g fill="none" stroke="#245c4a" stroke-width="1.90" stroke-linejoin="round" stroke-linecap="round"><path d="M102.70 82.00 L131.60 82.00 L146.00 96.40 L146.00 145.30 Q146.00 149.80 141.50 149.80 L102.70 149.80 Q98.20 149.80 98.20 145.30 L98.20 86.50 Q98.20 82.00 102.70 82.00 Z"/><path d="M131.60 82.00 L131.60 96.40 L146.00 96.40"/><line x1="106.8" y1="111.10" x2="137.20" y2="111.10"/><line x1="106.8" y1="121.00" x2="137.20" y2="121.00"/><line x1="106.8" y1="130.80" x2="137.20" y2="130.80"/><line x1="106.8" y1="140.40" x2="122.40" y2="140.40"/></g></svg></div>
<div class="t title" style="top:272.6px;direction:ltr;letter-spacing:0.77px;right:24.23px">users.json</div>
<div class="t mr" style="top:307.0px;direction:rtl">JSON</div>
<div class="t ml" style="top:307.0px">1.9 ك.بايت</div>
</div>
</body></html>
